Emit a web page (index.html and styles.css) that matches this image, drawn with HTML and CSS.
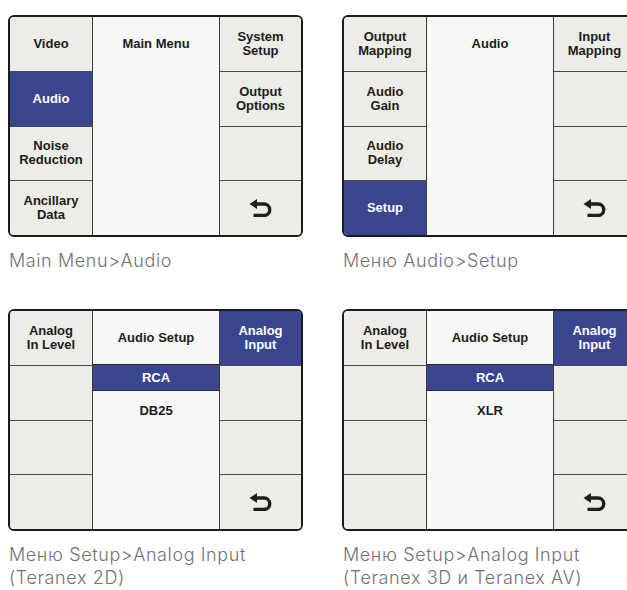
FILE: index.html
```html
<!DOCTYPE html>
<html lang="ru">
<head>
    <meta charset="UTF-8">
    <meta name="viewport" content="width=device-width, initial-scale=1.0">
    <title>Audio Menus</title>
    <link rel="stylesheet" href="styles.css">
</head>
<body>
    <div class="page">
        <figure class="shot">
            <div class="panel">
                <div class="side">
                    <div class="cell">Video</div>
                    <div class="cell on">Audio</div>
                    <div class="cell">Noise<br>Reduction</div>
                    <div class="cell">Ancillary<br>Data</div>
                </div>
                <div class="center">
                    <div class="title">Main Menu</div>
                </div>
                <div class="side">
                    <div class="cell">System<br>Setup</div>
                    <div class="cell">Output<br>Options</div>
                    <div class="cell"></div>
                    <div class="cell back">
                        <svg width="24" height="18" viewBox="0 0 24 18"><path d="M0.5 5 L8 0 V10 Z" fill="#1e1e1e"/><path d="M7 5 H15 A5.75 5.75 0 0 1 15 16.5 H4.5" fill="none" stroke="#1e1e1e" stroke-width="3.4"/></svg>
                    </div>
                </div>
            </div>
            <figcaption>Main Menu&gt;Audio</figcaption>
        </figure>

        <figure class="shot">
            <div class="panel">
                <div class="side">
                    <div class="cell">Output<br>Mapping</div>
                    <div class="cell">Audio<br>Gain</div>
                    <div class="cell">Audio<br>Delay</div>
                    <div class="cell on">Setup</div>
                </div>
                <div class="center">
                    <div class="title">Audio</div>
                </div>
                <div class="side">
                    <div class="cell">Input<br>Mapping</div>
                    <div class="cell"></div>
                    <div class="cell"></div>
                    <div class="cell back">
                        <svg width="24" height="18" viewBox="0 0 24 18"><path d="M0.5 5 L8 0 V10 Z" fill="#1e1e1e"/><path d="M7 5 H15 A5.75 5.75 0 0 1 15 16.5 H4.5" fill="none" stroke="#1e1e1e" stroke-width="3.4"/></svg>
                    </div>
                </div>
            </div>
            <figcaption>Меню Audio&gt;Setup</figcaption>
        </figure>

        <figure class="shot">
            <div class="panel">
                <div class="side">
                    <div class="cell">Analog<br>In Level</div>
                    <div class="cell"></div>
                    <div class="cell"></div>
                    <div class="cell"></div>
                </div>
                <div class="center">
                    <div class="title">Audio Setup</div>
                    <div class="item on">RCA</div>
                    <div class="item">DB25</div>
                </div>
                <div class="side">
                    <div class="cell on">Analog<br>Input</div>
                    <div class="cell"></div>
                    <div class="cell"></div>
                    <div class="cell back">
                        <svg width="24" height="18" viewBox="0 0 24 18"><path d="M0.5 5 L8 0 V10 Z" fill="#1e1e1e"/><path d="M7 5 H15 A5.75 5.75 0 0 1 15 16.5 H4.5" fill="none" stroke="#1e1e1e" stroke-width="3.4"/></svg>
                    </div>
                </div>
            </div>
            <figcaption>Меню Setup&gt;Analog Input<br>(Teranex 2D)</figcaption>
        </figure>

        <figure class="shot">
            <div class="panel">
                <div class="side">
                    <div class="cell">Analog<br>In Level</div>
                    <div class="cell"></div>
                    <div class="cell"></div>
                    <div class="cell"></div>
                </div>
                <div class="center">
                    <div class="title">Audio Setup</div>
                    <div class="item on">RCA</div>
                    <div class="item">XLR</div>
                </div>
                <div class="side">
                    <div class="cell on">Analog<br>Input</div>
                    <div class="cell"></div>
                    <div class="cell"></div>
                    <div class="cell back">
                        <svg width="24" height="18" viewBox="0 0 24 18"><path d="M0.5 5 L8 0 V10 Z" fill="#1e1e1e"/><path d="M7 5 H15 A5.75 5.75 0 0 1 15 16.5 H4.5" fill="none" stroke="#1e1e1e" stroke-width="3.4"/></svg>
                    </div>
                </div>
            </div>
            <figcaption>Меню Setup&gt;Analog Input<br>(Teranex 3D и Teranex AV)</figcaption>
        </figure>
    </div>
</body>
</html>
```

FILE: styles.css
```css
html, body {
    margin: 0;
    padding: 0;
    background-color: #fff;
    overflow: hidden;
}
.page {
    display: grid;
    grid-template-columns: 295px 295px;
    column-gap: 39px;
    row-gap: 37px;
    padding: 15px 0 0 8px;
    width: 700px;
}
.shot {
    margin: 0;
}
.panel {
    box-sizing: border-box;
    width: 295px;
    height: 222px;
    border: 2px solid #1c1c1c;
    border-radius: 6px;
    overflow: hidden;
    display: grid;
    grid-template-columns: 82px 128px 1fr;
    font-family: "Liberation Sans", Arial, sans-serif;
    font-weight: bold;
    font-size: 13px;
    line-height: 14px;
    color: #1c1c1c;
}
.side {
    display: flex;
    flex-direction: column;
}
.cell {
    flex: 1;
    display: flex;
    align-items: center;
    justify-content: center;
    text-align: center;
    background-color: #edece6;
    border-top: 1px solid #4a4a4a;
}
.cell:first-child {
    border-top: none;
}
.cell.on {
    background-color: #39458f;
    color: #fff;
}
.back svg {
    display: block;
}
.center {
    background-color: #f7f7f5;
    border-left: 1px solid #3a3a3a;
    border-right: 1px solid #3a3a3a;
}
.title {
    height: 53px;
    display: flex;
    align-items: center;
    justify-content: center;
}
.item {
    height: 40px;
    display: flex;
    align-items: center;
    justify-content: center;
}
.item.on {
    box-sizing: border-box;
    height: 27px;
    background-color: #39458f;
    color: #fff;
    border-top: 1px solid #2a2a2a;
    border-bottom: 1px solid #2a2a2a;
}
figcaption {
    margin-top: 12px;
    padding-left: 1px;
    font-family: Inter, "Liberation Sans", sans-serif;
    font-weight: 300;
    font-size: 18px;
    letter-spacing: 0.6px;
    line-height: 23px;
    color: #727272;
}
```
